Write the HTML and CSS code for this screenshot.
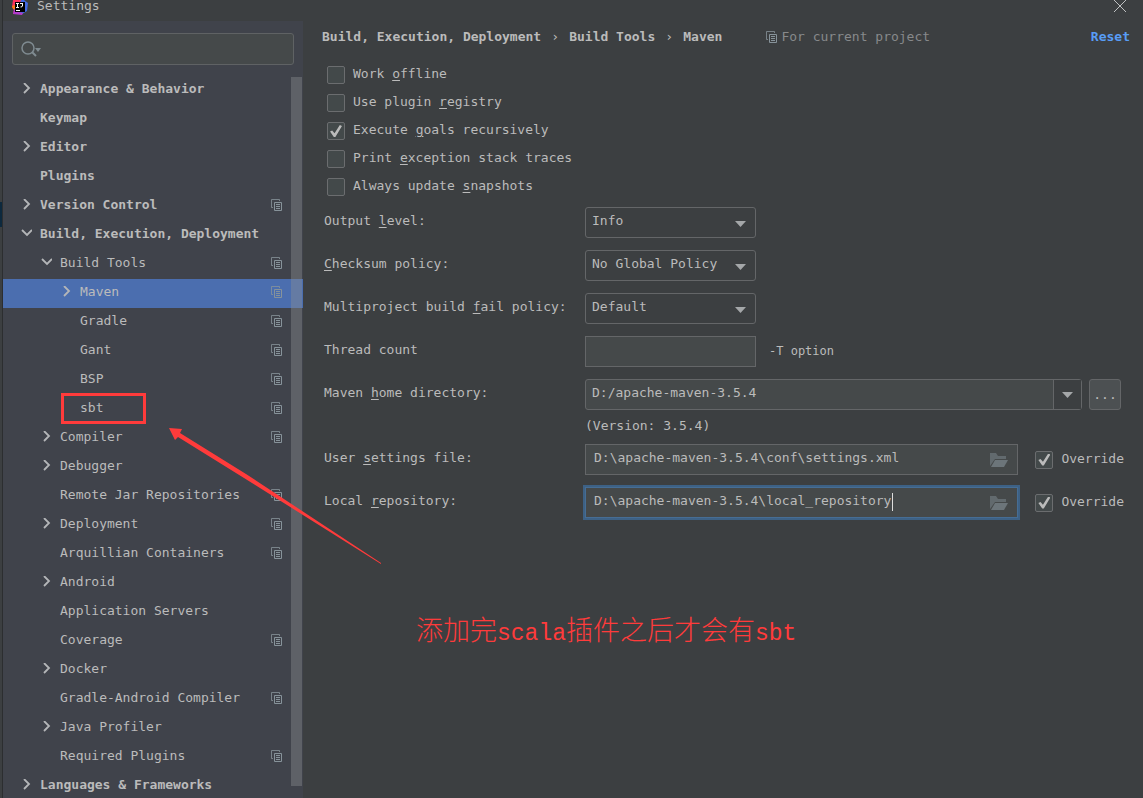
FILE: index.html
```html
<!DOCTYPE html>
<html lang="en">
<head>
<meta charset="utf-8">
<title>Settings</title>
<link rel="stylesheet" href="styles.css">
</head>
<body>
<svg class="defs" aria-hidden="true">
  <symbol id="right" viewBox="0 0 12 12"><path d="M4 0l5 5-5 5" fill="none" stroke="#b4b6b8" stroke-width="1.800"/></symbol>
  <symbol id="down" viewBox="0 0 12 12"><path d="M2 2l5 5 5-5" fill="none" stroke="#b4b6b8" stroke-width="1.800"/></symbol>
  <symbol id="copy" viewBox="0 0 12 12"><path d="M3 8.500H1.500v-8h8V2" fill="none" stroke="#87939a" stroke-opacity=".8"/><path d="M4.500 3.500h7v8h-7z" fill="none" stroke="#87939a"/><path d="M6 5.500h4M6 7.500h4M6 9.500h4" stroke="#87939a"/></symbol>
  <symbol id="folder" viewBox="0 0 20 16"><path d="M1 14V1h6l2 3h8v3H6z" fill="#626a6e"/><path d="M2 15L6 8h13l-4 7z" fill="#6c757a"/></symbol>
  <symbol id="caret" viewBox="0 0 12 6"><path d="M0 0h11L5.500 6z" fill="#a4a7a9"/></symbol>
</svg>
<div class="window">
  <header class="titlebar">
    <svg class="logo" viewBox="0 0 16 16" aria-hidden="true"><path d="M1 0h8l3 3-8 11H1l1-4-2-3z" fill="#fe315d"/><path d="M0 6l3-1v5l-2-1z" fill="#f97a12"/><path d="M9 0h3l4 3-1 8-5 3-5-3z" fill="#4169e1"/><path d="M1 14l1-5 5 3 4 1-1 2z" fill="#b13ccc"/><path d="M3 2h10v10H3z" fill="#000"/><path d="M4 3.500h3M5.500 3v4M4 7.500h3M8 3.500h3M10.500 3v3q0 1-2 1M4 10.500h4" fill="none" stroke="#fff"/></svg>
    <h1>Settings</h1>
    <button class="close" aria-label="Close"><svg viewBox="0 0 12 12"><path d="M0 0l12 12M12 0L0 12" stroke="#bfc1c2" stroke-width="1"/></svg></button>
  </header>
  <aside class="sidebar">
    <div class="search">
      <svg viewBox="0 0 22 16" aria-hidden="true"><circle cx="7" cy="7" r="6" fill="none" stroke="#7f8b91" stroke-width="1.500"/><path d="M11 11l4 4" stroke="#7f8b91" stroke-width="2"/><path d="M14 7h6l-3 4z" fill="#7f8b91"/></svg>
      <input type="search" aria-label="Search settings">
    </div>
    <ul class="tree">
      <li class="top"><svg class="arrow"><use href="#right"/></svg><span>Appearance &amp; Behavior</span></li>
      <li class="top"><i class="arrow"></i><span>Keymap</span></li>
      <li class="top"><svg class="arrow"><use href="#right"/></svg><span>Editor</span></li>
      <li class="top"><i class="arrow"></i><span>Plugins</span></li>
      <li class="top"><svg class="arrow"><use href="#right"/></svg><span>Version Control</span><svg class="copy"><use href="#copy"/></svg></li>
      <li class="top"><svg class="arrow"><use href="#down"/></svg><span>Build, Execution, Deployment</span></li>
      <li class="sub"><svg class="arrow"><use href="#down"/></svg><span>Build Tools</span><svg class="copy"><use href="#copy"/></svg></li>
      <li class="leaf selected"><svg class="arrow"><use href="#right"/></svg><span>Maven</span><svg class="copy"><use href="#copy"/></svg></li>
      <li class="leaf"><i class="arrow"></i><span>Gradle</span><svg class="copy"><use href="#copy"/></svg></li>
      <li class="leaf"><i class="arrow"></i><span>Gant</span><svg class="copy"><use href="#copy"/></svg></li>
      <li class="leaf"><i class="arrow"></i><span>BSP</span><svg class="copy"><use href="#copy"/></svg></li>
      <li class="leaf marked"><i class="arrow"></i><span>sbt</span><svg class="copy"><use href="#copy"/></svg></li>
      <li class="sub"><svg class="arrow"><use href="#right"/></svg><span>Compiler</span><svg class="copy"><use href="#copy"/></svg></li>
      <li class="sub"><svg class="arrow"><use href="#right"/></svg><span>Debugger</span></li>
      <li class="sub"><i class="arrow"></i><span>Remote Jar Repositories</span><svg class="copy"><use href="#copy"/></svg></li>
      <li class="sub"><svg class="arrow"><use href="#right"/></svg><span>Deployment</span><svg class="copy"><use href="#copy"/></svg></li>
      <li class="sub"><i class="arrow"></i><span>Arquillian Containers</span><svg class="copy"><use href="#copy"/></svg></li>
      <li class="sub"><svg class="arrow"><use href="#right"/></svg><span>Android</span></li>
      <li class="sub"><i class="arrow"></i><span>Application Servers</span></li>
      <li class="sub"><i class="arrow"></i><span>Coverage</span><svg class="copy"><use href="#copy"/></svg></li>
      <li class="sub"><svg class="arrow"><use href="#right"/></svg><span>Docker</span></li>
      <li class="sub"><i class="arrow"></i><span>Gradle-Android Compiler</span><svg class="copy"><use href="#copy"/></svg></li>
      <li class="sub"><svg class="arrow"><use href="#right"/></svg><span>Java Profiler</span></li>
      <li class="sub"><i class="arrow"></i><span>Required Plugins</span><svg class="copy"><use href="#copy"/></svg></li>
      <li class="top"><svg class="arrow"><use href="#right"/></svg><span>Languages &amp; Frameworks</span></li>
    </ul>
    <div class="scrollbar"></div>
  </aside>
  <main class="panel">
    <div class="crumbs">
      <b>Build, Execution, Deployment</b><span class="sep">›</span><b>Build Tools</b><span class="sep">›</span><b>Maven</b>
      <span class="scope"><svg class="copy"><use href="#copy"/></svg>For current project</span>
      <a class="reset" href="#">Reset</a>
    </div>
    <div class="checks">
      <label><input type="checkbox"><span>Work <u>o</u>ffline</span></label>
      <label><input type="checkbox"><span>Use plugin <u>r</u>egistry</span></label>
      <label><input type="checkbox" checked><span>Execute <u>g</u>oals recursively</span></label>
      <label><input type="checkbox"><span>Print <u>e</u>xception stack traces</span></label>
      <label><input type="checkbox"><span>Always update <u>s</u>napshots</span></label>
    </div>
    <div class="form">
      <label for="level">Output <u>l</u>evel:</label>
      <div class="line"><div class="pick"><select id="level"><option>Info</option></select><svg><use href="#caret"/></svg></div></div>
      <label for="checksum"><u>C</u>hecksum policy:</label>
      <div class="line"><div class="pick"><select id="checksum"><option>No Global Policy</option></select><svg><use href="#caret"/></svg></div></div>
      <label for="fail">Multiproject build <u>f</u>ail policy:</label>
      <div class="line"><div class="pick"><select id="fail"><option>Default</option></select><svg><use href="#caret"/></svg></div></div>
      <label for="threads">Thread count</label>
      <div class="line"><div class="field short"><input id="threads" type="text"></div><span class="hint">-T option</span></div>
      <label for="home">Maven <u>h</u>ome directory:</label>
      <div class="line home"><div class="field combo"><input id="home" type="text" value="D:/apache-maven-3.5.4"><button aria-label="Show directories"><svg><use href="#caret"/></svg></button></div><button class="browse">...</button></div>
      <p class="version">(Version: 3.5.4)</p>
      <label for="user">User <u>s</u>ettings file:</label>
      <div class="line"><div class="field path"><input id="user" type="text" value="D:\apache-maven-3.5.4\conf\settings.xml"><svg><use href="#folder"/></svg></div><label class="override"><input type="checkbox" checked><span>Override</span></label></div>
      <label for="repo">Local <u>r</u>epository:</label>
      <div class="line"><div class="field path active"><input id="repo" type="text" value="D:\apache-maven-3.5.4\local_repository"><span class="cursor"></span><svg><use href="#folder"/></svg></div><label class="override"><input type="checkbox" checked><span>Override</span></label></div>
    </div>
    <p class="note">添加完<span>scala</span>插件之后才会有<span>sbt</span></p>
  </main>
  <svg class="pointer" viewBox="0 0 214 138" aria-hidden="true"><path d="M1 0l13 1-2 4 66 41 135 89v1L76 50 10 9l-3 3z" fill="#ff3b3b"/></svg>
</div>
</body>
</html>
```
FILE: styles.css
```css
*, *::before, *::after { box-sizing: border-box; }
body {
  margin: 0;
  background: #3c3f41;
  color: #bbbbbb;
  font: 13px/20px "DejaVu Sans Mono", monospace;
}
button, input, select { font: inherit; color: inherit; margin: 0; padding: 0; border: 0; background: none; outline: 0; }
ul, p, h1 { margin: 0; padding: 0; }
svg { display: block; flex: none; }
u { text-underline-offset: 2px; }
.defs { display: none; }

.window {
  position: relative;
  display: grid;
  grid-template: 21px 1fr / 300px 1fr;
  height: 100vh;
  overflow: hidden;
  padding-left: 3px;
  background: linear-gradient(#0d293e, #0d293e) 0 202px / 2px 25px no-repeat, linear-gradient(90deg, #3c3f41 2px, #2c2e30 2px, #2c2e30 3px, #3c3f41 3px);
}
.titlebar { grid-column: 1 / 3; display: flex; align-items: flex-start; padding: 0 17px 0 9px; }
.logo { width: 16px; height: 16px; }
.titlebar h1 { flex: 1; margin-left: 9px; font-size: 13px; font-weight: 400; line-height: 12px; }
.close svg { width: 12px; height: 12px; }

.sidebar { position: relative; min-height: 0; overflow: hidden; background: #40434b; }
.search {
  display: flex;
  align-items: center;
  height: 32px;
  margin: 12px 9px 11px;
  padding-left: 8px;
  border: 1px solid #5f6264;
  border-radius: 3px;
  background: #45494a;
}
.search svg { width: 22px; height: 16px; }
.search input { flex: 1; min-width: 0; height: 28px; }
.tree { list-style: none; }
.tree li { position: relative; display: flex; align-items: center; height: 29px; padding-right: 21px; padding-bottom: 3px; }
.tree span { flex: 1; padding-bottom: 1px; white-space: nowrap; }
.arrow { width: 12px; height: 12px; margin-right: 8px; }
.copy { width: 12px; height: 12px; }
.top { padding-left: 17px; font-weight: 700; }
.sub { padding-left: 37px; }
.leaf { padding-left: 57px; }
.selected { background: #4b6eaf; }
.marked::after { content: ""; position: absolute; left: 58px; top: -2px; width: 85px; height: 31px; border: 3px solid #ff3b3b; }
.scrollbar { position: absolute; top: 56px; right: 1px; bottom: 12px; width: 11px; background: rgba(140, 142, 145, 0.4); }

.panel { min-width: 0; padding-left: 19px; }
.crumbs { display: flex; align-items: center; height: 32px; padding-right: 13px; white-space: nowrap; }
.sep { width: 8px; margin: 0 10px; }
.scope { display: flex; align-items: center; gap: 4px; margin-left: 43px; color: #87898b; }
.reset { margin-left: auto; color: #589df6; font-weight: 700; text-decoration: none; }

.checks { display: flex; flex-direction: column; gap: 8px; padding: 12px 0 10px 5px; }
.checks label, .override { display: flex; align-items: center; gap: 8px; height: 20px; }
.checks span, .override span { padding-bottom: 2px; }
input[type="checkbox"] {
  appearance: none;
  display: grid;
  place-items: center;
  width: 18px;
  height: 18px;
  border: 1px solid #6b6d6f;
  border-radius: 2px;
  background: #43494a;
}
input[type="checkbox"]:checked::before {
  content: "";
  width: 12px;
  height: 12px;
  background: #bbbbbb;
  clip-path: polygon(0 55%, 18% 45%, 38% 68%, 82% 0, 100% 8%, 45% 100%, 32% 100%);
}

.form { display: grid; grid-template-columns: 261px 1fr; row-gap: 12px; padding: 0 19px 0 2px; }
.form > label { padding-top: 4px; white-space: nowrap; }
.line { display: flex; align-items: center; height: 31px; }
.pick { position: relative; width: 171px; height: 31px; }
.pick select { appearance: none; width: 100%; height: 100%; padding: 0 24px 3px 6px; border: 1px solid #646668; border-radius: 3px; }
.pick svg { position: absolute; right: 9px; top: 14px; width: 12px; height: 6px; pointer-events: none; }
.field { position: relative; display: flex; align-items: center; height: 31px; border: 1px solid #646668; background: #45494a; }
.field input { flex: 1; min-width: 0; height: 100%; padding: 0 6px 4px; }
.short { width: 171px; }
.hint { margin-left: 13px; padding-bottom: 2px; font-size: 12px; }
.home { gap: 7px; margin-right: 3px; }
.combo { flex: 1; border-radius: 3px; }
.combo button { display: grid; place-items: center; width: 28px; height: 100%; border-left: 1px solid #646668; background: #3c3f41; }
.combo button svg { width: 12px; height: 6px; }
.browse { width: 32px; height: 31px; border: 1px solid #646668; border-radius: 3px; background: #4c5052; }
.version { grid-column: 2; height: 10px; line-height: 8px; }
.path { flex: 1; margin-right: 17px; }
.path input { padding-left: 8px; }
.path svg { width: 20px; height: 16px; margin-right: 8px; }
.active { border-color: #466d94; box-shadow: 0 0 0 2px #3d6185; }
.cursor { position: absolute; left: calc(9px + 38ch); top: 5px; width: 1px; height: 18px; background: #dddddd; }

.note { padding: 93px 0 0 94px; color: #ff3b3b; font: 300 27px/36px "Noto Sans CJK SC", sans-serif; white-space: nowrap; }
.note span { font: 400 23px/36px "Liberation Mono", monospace; }
.pointer { position: absolute; left: 168px; top: 428px; width: 214px; height: 138px; pointer-events: none; }
```
